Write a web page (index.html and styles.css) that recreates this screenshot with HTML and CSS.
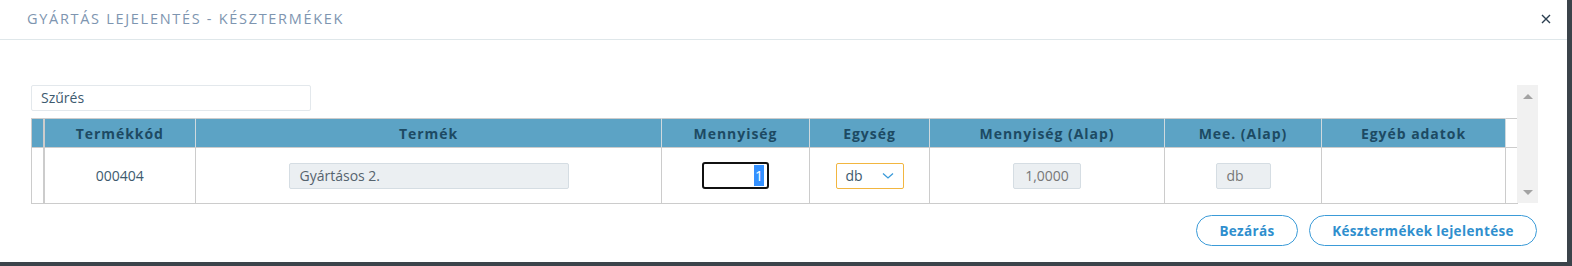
FILE: index.html
```html
<!DOCTYPE html>
<html lang="hu">
  <head>
    <meta charset="UTF-8" />
    <meta name="viewport" content="width=device-width, initial-scale=1.0" />
    <title>Gyártás lejelentés - Késztermékek</title>
    <link rel="stylesheet" href="styles.css">
  </head>
  <body>
    <div class="modal">
      <div class="modal-head">
        <h1 class="modal-title">Gyártás lejelentés - Késztermékek</h1>
        <button class="close-btn" aria-label="Bezárás">
          <svg width="10" height="10" viewBox="0 0 10 10">
            <path d="M1 1 L9 9 M9 1 L1 9" stroke="#2b3e50" stroke-width="1.4" fill="none" />
          </svg>
        </button>
      </div>

      <div class="modal-body">
        <div class="grid-wrap">
          <div class="grid">
            <div class="filter">Szűrés</div>
            <table class="products">
              <colgroup>
                <col class="c-sel" />
                <col class="c-code" />
                <col class="c-name" />
                <col class="c-qty" />
                <col class="c-unit" />
                <col class="c-base" />
                <col class="c-mee" />
                <col class="c-other" />
                <col class="c-pad" />
              </colgroup>
              <thead>
                <tr>
                  <th class="sel"></th>
                  <th>Termékkód</th>
                  <th>Termék</th>
                  <th>Mennyiség</th>
                  <th>Egység</th>
                  <th>Mennyiség (Alap)</th>
                  <th>Mee. (Alap)</th>
                  <th>Egyéb adatok</th>
                  <th class="pad"></th>
                </tr>
              </thead>
              <tbody>
                <tr>
                  <td class="sel"></td>
                  <td>000404</td>
                  <td><div class="ro-box name-box">Gyártásos 2.</div></td>
                  <td><div class="qty-box"><span class="qty-sel">1</span></div></td>
                  <td>
                    <div class="unit-select">
                      <span>db</span>
                      <svg width="12" height="8" viewBox="0 0 12 8">
                        <path d="M1 1.5 L6 6 L11 1.5" stroke="#3a9ad9" stroke-width="1.3" fill="none" />
                      </svg>
                    </div>
                  </td>
                  <td><div class="ro-box base-box">1,0000</div></td>
                  <td><div class="ro-box mee-box">db</div></td>
                  <td></td>
                  <td class="pad"></td>
                </tr>
              </tbody>
            </table>
          </div>
          <div class="scrollbar">
            <span class="arrow up"></span>
            <span class="arrow down"></span>
          </div>
        </div>

        <div class="modal-foot">
          <button class="btn btn-close">Bezárás</button>
          <button class="btn btn-report">Késztermékek lejelentése</button>
        </div>
      </div>
    </div>
  </body>
</html>
```

FILE: styles.css
```css
* {
  margin: 0;
  padding: 0;
  box-sizing: border-box;
}
body {
  background-color: #3b434a;
  font-family: "Open Sans", "Noto Sans", sans-serif;
  color: #3d5a6e;
  font-size: 14px;
}
.modal {
  width: 1567px;
  height: 262px;
  background-color: #fff;
}
.modal-head {
  height: 40px;
  display: flex;
  align-items: center;
  justify-content: space-between;
  padding: 0 15px 0 27px;
  border-bottom: 1px solid #dfe7ea;
}
.modal-title {
  font-size: 14.5px;
  font-weight: 400;
  text-transform: uppercase;
  letter-spacing: 1.7px;
  color: #7e95b0;
  margin-top: -2px;
}
.close-btn {
  background: none;
  border: none;
  width: 12px;
  height: 12px;
  display: flex;
  align-items: center;
  justify-content: center;
  margin-top: -1px;
}
.modal-body {
  padding: 45px 29px 0 31px;
}
.grid-wrap {
  display: flex;
}
.grid {
  width: 1486px;
}
.filter {
  width: 280px;
  height: 26px;
  border: 1px solid #e3e8ec;
  border-radius: 2px;
  padding: 0 9px;
  line-height: 24px;
  color: #3d5a6e;
  margin-bottom: 7px;
}
.products {
  width: 1486px;
  table-layout: fixed;
  border-collapse: collapse;
}
.c-sel { width: 12px; }
.c-code { width: 152px; }
.c-name { width: 466px; }
.c-qty { width: 148px; }
.c-unit { width: 120px; }
.c-base { width: 235px; }
.c-mee { width: 157px; }
.c-other { width: 184px; }
.c-pad { width: 12px; }

.products th {
  height: 29px;
  background-color: #5ca3c5;
  color: #1d4a63;
  font-weight: 700;
  font-size: 14px;
  letter-spacing: 0.95px;
  text-align: center;
  border: 1px solid #cfd9de;
  border-top-color: #cccccc;
  border-bottom-color: #cccccc;
}
.products th.pad {
  background-color: #fff;
}
.products td {
  height: 56px;
  text-align: center;
  border: 1px solid #cccccc;
  color: #3d5a6e;
}
.products .sel {
  border-right: 2px solid #cccccc;
  border-left: 1px solid #cccccc;
}
.ro-box {
  height: 26px;
  margin: 0 auto;
  background-color: #ebeff2;
  border: 1px solid #d5dde3;
  border-radius: 2px;
  line-height: 24px;
  text-align: left;
  color: #6b7780;
}
.name-box {
  width: 280px;
  padding-left: 10px;
  color: #55636e;
}
.base-box {
  width: 68px;
  text-align: center;
  color: #777;
}
.mee-box {
  width: 55px;
  padding-left: 10px;
  color: #777;
}
.qty-box {
  width: 67px;
  height: 27px;
  margin: 0 auto;
  border: 2px solid #111;
  border-radius: 3px;
  display: flex;
  align-items: center;
  justify-content: flex-end;
  padding-right: 3px;
}
.qty-sel {
  background-color: #3390ff;
  color: #fff;
  line-height: 21px;
  padding: 0 1px;
}
.unit-select {
  width: 68px;
  height: 26px;
  margin: 0 auto;
  border: 1px solid #f2b640;
  border-radius: 2px;
  display: flex;
  align-items: center;
  justify-content: space-between;
  padding: 0 9px 0 9px;
  color: #3d5a6e;
}
.unit-select svg {
  margin-top: 1px;
}
.scrollbar {
  width: 21px;
  height: 118px;
  background-color: #f1f1f1;
  display: flex;
  flex-direction: column;
  justify-content: space-between;
  align-items: center;
  padding: 9px 0 8px;
}
.arrow {
  width: 0;
  height: 0;
  border-left: 5px solid transparent;
  border-right: 5px solid transparent;
}
.arrow.up {
  border-bottom: 5px solid #a3a3a3;
}
.arrow.down {
  border-top: 5px solid #a3a3a3;
}
.modal-foot {
  display: flex;
  justify-content: flex-end;
  gap: 11px;
  margin-top: 11px;
  padding-right: 1px;
}
.btn {
  height: 31px;
  background-color: #fff;
  border: 1px solid #3b9bd8;
  border-radius: 16px;
  color: #2f8fce;
  font-family: "Open Sans", "Noto Sans", sans-serif;
  font-weight: 700;
  font-size: 13.5px;
  letter-spacing: 0.35px;
  cursor: pointer;
}
.btn-close {
  width: 102px;
}
.btn-report {
  width: 228px;
}
```
